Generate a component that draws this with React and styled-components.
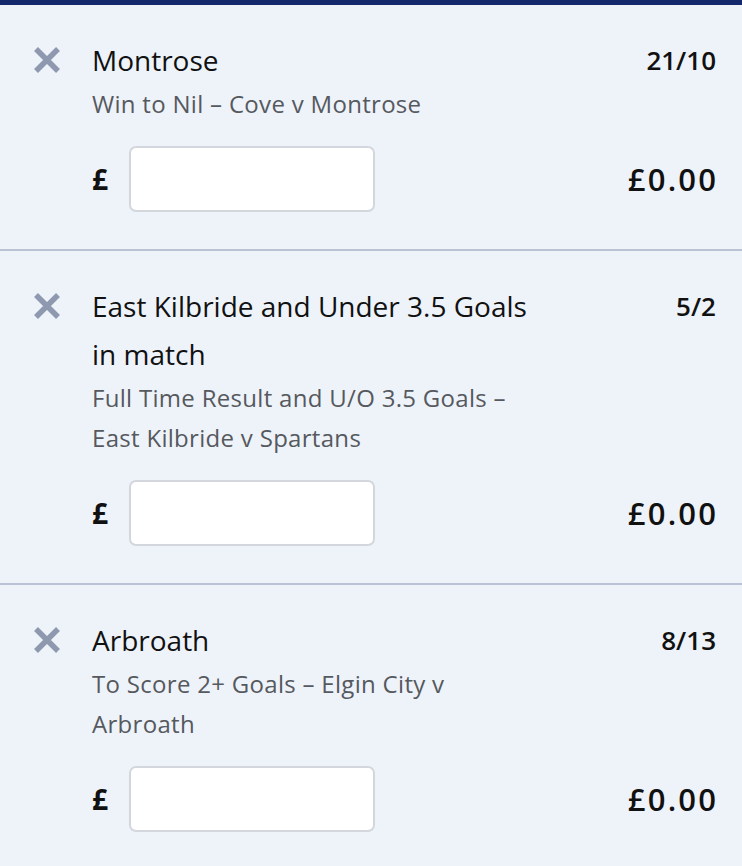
import styled, { createGlobalStyle } from "styled-components";

const GlobalStyle = createGlobalStyle`
  html, body {
    margin: 0;
    padding: 0;
    background: #eef3fa;
  }
  body {
    font-family: "Open Sans", "Noto Sans", sans-serif;
    color: #111;
  }
`;

const bets = [
  {
    id: 1,
    selection: "Montrose",
    market: "Win to Nil – Cove v Montrose",
    odds: "21/10",
  },
  {
    id: 2,
    selection: "East Kilbride and Under 3.5 Goals in match",
    market: "Full Time Result and U/O 3.5 Goals – East Kilbride v Spartans",
    odds: "5/2",
  },
  {
    id: 3,
    selection: "Arbroath",
    market: "To Score 2+ Goals – Elgin City v Arbroath",
    odds: "8/13",
  },
];

function CloseIcon() {
  return (
    <svg width="28" height="28" viewBox="0 0 28 28">
      <path
        d="M3 3 L25 25 M25 3 L3 25"
        stroke="#8e99af"
        strokeWidth="5.5"
        strokeLinecap="butt"
      />
    </svg>
  );
}

export default function App() {
  return (
    <>
      <GlobalStyle />
      <TopBar />
      <Slip>
        {bets.map((bet) => (
          <Bet key={bet.id}>
            <Remove type="button" aria-label="Remove selection">
              <CloseIcon />
            </Remove>
            <Info>
              <Selection>{bet.selection}</Selection>
              <Market>{bet.market}</Market>
            </Info>
            <Odds>{bet.odds}</Odds>
            <Stake>
              <Pound>£</Pound>
              <StakeInput type="text" inputMode="decimal" />
            </Stake>
            <Returns>£0.00</Returns>
          </Bet>
        ))}
      </Slip>
    </>
  );
}

const TopBar = styled.div`
  height: 5px;
  background: #13296b;
`;

const Slip = styled.div`
  display: flex;
  flex-direction: column;
`;

const Bet = styled.div`
  display: grid;
  grid-template-columns: 59px 1fr auto;
  grid-template-areas:
    "remove info odds"
    ". stake returns";
  padding: 31px 26px 37px 33px;
  border-bottom: 2px solid #b9c3d3;
`;

const Remove = styled.button`
  grid-area: remove;
  align-self: start;
  height: 48px;
  display: flex;
  align-items: center;
  padding: 0;
  margin: 0;
  border: none;
  background: none;
  cursor: pointer;
`;

const Info = styled.div`
  grid-area: info;
  max-width: 448px;
`;

const Selection = styled.div`
  font-size: 28px;
  line-height: 48px;
  color: #111;
`;

const Market = styled.div`
  font-size: 24px;
  letter-spacing: 0.3px;
  line-height: 40px;
  color: #56595e;
`;

const Odds = styled.div`
  grid-area: odds;
  font-size: 26px;
  font-weight: 600;
  line-height: 48px;
  text-align: right;
`;

const Stake = styled.div`
  grid-area: stake;
  display: flex;
  align-items: center;
  gap: 19px;
  margin-top: 22px;
`;

const Pound = styled.span`
  width: 18px;
  font-size: 28px;
  font-weight: 700;
`;

const StakeInput = styled.input`
  width: 246px;
  height: 66px;
  box-sizing: border-box;
  border: 2px solid #d3d7dd;
  border-radius: 7px;
  background: #fff;
  font: inherit;
  font-size: 24px;
  padding: 0 12px;
  outline: none;
`;

const Returns = styled.div`
  grid-area: returns;
  align-self: end;
  height: 66px;
  display: flex;
  align-items: center;
  justify-content: flex-end;
  font-size: 31px;
  font-weight: 600;
  letter-spacing: 2.2px;
  margin-right: -2.2px;
`;
